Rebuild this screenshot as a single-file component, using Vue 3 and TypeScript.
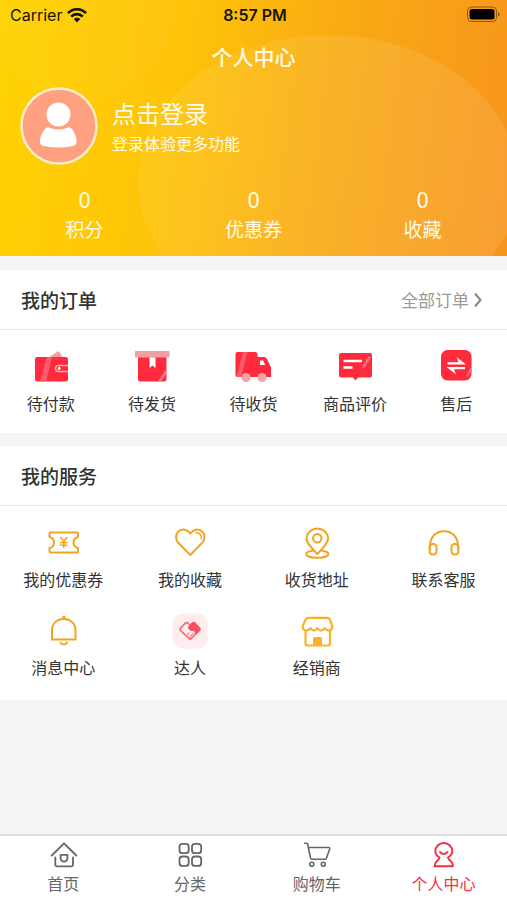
<script setup lang="ts">
interface Entry {
  id: string
  label: string
}

interface Stat {
  value: number
  label: string
}

const stats: Stat[] = [
  { value: 0, label: '积分' },
  { value: 0, label: '优惠券' },
  { value: 0, label: '收藏' },
]

const orders: Entry[] = [
  { id: 'wallet', label: '待付款' },
  { id: 'box', label: '待发货' },
  { id: 'truck', label: '待收货' },
  { id: 'review', label: '商品评价' },
  { id: 'refund', label: '售后' },
]

const services: Entry[] = [
  { id: 'coupon', label: '我的优惠券' },
  { id: 'heart', label: '我的收藏' },
  { id: 'pin', label: '收货地址' },
  { id: 'headset', label: '联系客服' },
  { id: 'bell', label: '消息中心' },
  { id: 'talent', label: '达人' },
  { id: 'shop', label: '经销商' },
]

const tabs: Entry[] = [
  { id: 'home', label: '首页' },
  { id: 'category', label: '分类' },
  { id: 'cart', label: '购物车' },
  { id: 'me', label: '个人中心' },
]

const activeTab = 'me'
</script>

<template>
  <div class="page">
    <header class="hero">
      <svg class="hero-art" viewBox="0 0 507 256" preserveAspectRatio="none" aria-hidden="true">
        <defs>
          <linearGradient id="glow" x1="0" y1="0" x2="1" y2="0">
            <stop offset="0" stop-color="#fff" stop-opacity="0.07" />
            <stop offset="1" stop-color="#fff" stop-opacity="0.1" />
          </linearGradient>
        </defs>
        <circle cx="82" cy="8" r="92" fill="#fff" fill-opacity="0.03" />
        <ellipse cx="328" cy="182" rx="190" ry="147" fill="url(#glow)" />
      </svg>

      <div class="status">
        <div class="carrier">
          <span>Carrier</span>
          <svg width="20" height="16" viewBox="0 0 20 16" aria-hidden="true">
            <g fill="none" stroke="#111" stroke-width="2.6">
              <path d="M1 6.2C6 1 14 1 19 6.2" />
              <path d="M4.2 9.6C7.5 6.300 12.500 6.300 15.800 9.600" />
            </g>
            <path d="M6.800 12Q10 9.300 13.200 12L10 15.400Z" fill="#111" />
          </svg>
        </div>
        <span class="clock">8:57 PM</span>
        <svg class="battery" width="34" height="18" viewBox="0 0 34 18" aria-hidden="true">
          <rect x="1.500" y="1" width="29" height="14.500" rx="4" fill="none" stroke="#8a5a10" stroke-width="1" />
          <rect x="3.500" y="3" width="25" height="10.500" rx="2.500" fill="#000" />
          <path d="M32 6v4.500Q33.500 10 33.500 8.200T32 6" fill="#8a5a10" />
        </svg>
      </div>

      <h1 class="title">个人中心</h1>

      <a class="user" href="#login">
        <svg class="avatar" width="78" height="78" viewBox="0 0 78 78" aria-hidden="true">
          <circle cx="39" cy="39" r="37.500" fill="#ffa180" stroke="#ffeccb" stroke-width="2.500" />
          <circle cx="38.500" cy="27.500" r="12" fill="#fff" />
          <path d="M28 40Q38.500 45 49 40C54 42.500 56.500 49 56.500 55Q56.500 58 53 59Q38 62 24 59Q20 58 20 55C20 49 23 42.500 28 40Z" fill="#fff" />
        </svg>
        <span class="user-text">
          <span class="user-name">点击登录</span>
          <span class="user-hint">登录体验更多功能</span>
        </span>
      </a>

      <ul class="stats">
        <li v-for="stat in stats" :key="stat.label">
          <span class="stat-value">{{ stat.value }}</span>
          <span class="stat-label">{{ stat.label }}</span>
        </li>
      </ul>
    </header>

    <main class="content">
      <section class="card">
        <div class="card-head">
          <h2>我的订单</h2>
          <a class="more" href="#orders">
            全部订单
            <svg width="10" height="16" viewBox="0 0 10 16" aria-hidden="true">
              <path d="M2 1.500L7.500 8L2 14.500" fill="none" stroke="#8c8c8c" stroke-width="2.200" />
            </svg>
          </a>
        </div>
        <nav class="orders">
          <a v-for="item in orders" :key="item.id" class="entry" :href="'#' + item.id">
            <svg width="36" height="36" viewBox="0 0 36 36" aria-hidden="true">
              <g v-if="item.id === 'wallet'">
                <path d="M15 9L24.500 2.500Q26 2 27 3.500L30 9Z" fill="#f0a0a5" />
                <rect x="2" y="8" width="33" height="24.500" rx="2.500" fill="#ff2a3c" />
                <path d="M14 8h5l-6 24.500H7Z" fill="#ff5b69" />
                <path d="M35 16.500H25.500a3 3 0 0 0 0 6H35" fill="#ff2a3c" stroke="#ffadb3" stroke-width="1.500" />
                <circle cx="26.200" cy="19.500" r="1.400" fill="#fff" />
              </g>
              <g v-else-if="item.id === 'box'">
                <path d="M4 8h28.500v22q0 2.500-2.500 2.500H6.500Q4 32.500 4 30Z" fill="#ff2a3c" />
                <rect x="1" y="2" width="34.500" height="6.500" rx="0.500" fill="#f0a0a5" />
                <path d="M15.500 8.500h6V19l-3-2.500-3 2.500Z" fill="#fff" />
                <path d="M32.500 20v4L27 32.500H23.500Z" fill="#ff7984" />
              </g>
              <g v-else-if="item.id === 'truck'">
                <path d="M2.500 3H20q2.500 0 2.500 2.500V8H29q2 0 3 2l4 8.500V28H2.500Q0.500 28 0.500 26V5Q0.500 3 2.500 3Z" fill="#ff2a3c" />
                <path d="M8 3h4.500L6 28H1.500Z" fill="#ff5b69" />
                <path d="M25 11.500h3.200l2 4.500H25Z" fill="#fff" />
                <circle cx="11" cy="28.500" r="4.500" fill="#f3a3a9" />
                <circle cx="27" cy="28.500" r="4.500" fill="#f3a3a9" />
              </g>
              <g v-else-if="item.id === 'review'">
                <path d="M4 4H33q2 0 2 2V26.500q0 2-2 2H21l-2.500 3-2.500-3H4q-2 0-2-2V6q0-2 2-2Z" fill="#ff2a3c" />
                <path d="M31.500 7.500h3L28 18.500H24.500Z" fill="#ff6f7b" />
                <path d="M6.500 12H25M6.500 18.500H15.500" stroke="#fff" stroke-width="2.500" />
              </g>
              <g v-else>
                <rect x="3" y="1" width="30.500" height="30.500" rx="6.500" fill="#ff2a3c" />
                <path d="M33.500 17.500v5L30 27.500h-2.500Z" fill="#ff6f7b" />
                <path d="M18.500 8L28 15.600H9.500V13.300H20.500ZM18 25.500L8.500 17.900H27V20.200H16Z" fill="#fff" />
              </g>
            </svg>
            <span>{{ item.label }}</span>
          </a>
        </nav>
      </section>

      <section class="card">
        <div class="card-head">
          <h2>我的服务</h2>
        </div>
        <nav class="services">
          <a v-for="item in services" :key="item.id" class="entry" :href="'#' + item.id">
            <svg width="36" height="36" viewBox="0 0 36 36" fill="none" stroke="#f3a324" stroke-width="2" stroke-linejoin="round" stroke-linecap="round" aria-hidden="true">
              <g v-if="item.id === 'coupon'">
                <path d="M5.500 7.500H32Q33 7.500 33 8.500V12C27 13.500 27 21.500 33 23V26.500Q33 27.500 32 27.500H5.500Q4.500 27.500 4.500 26.500V23C10.500 21.500 10.500 13.500 4.500 12V8.500Q4.500 7.500 5.500 7.500Z" />
                <path d="M15.500 12.500l3.300 4 3.300-4M18.800 16.500v6M15.500 17.500h6.600M15.500 20.200h6.600" stroke-width="1.600" />
              </g>
              <g v-else-if="item.id === 'heart'">
                <path d="M18.300 30L6.500 18C3 14.500 3.500 8.500 7 6S15.500 4.500 18.300 8.500C21 4.500 26 3.500 29.500 6S33.500 14.500 30 18Z" />
                <path d="M24 7.500C27.500 7.500 30 10.500 29.300 14" stroke-width="1.500" />
              </g>
              <g v-else-if="item.id === 'pin'">
                <path d="M18.300 29C13 23.500 7.500 18.500 7.500 13a10.900 10.600 0 0 1 21.700 0C29.200 18.500 23.500 23.500 18.300 29Z" />
                <circle cx="18.300" cy="13.200" r="4.200" />
                <path d="M13.500 25.700C9.500 26.300 7.200 27.500 7.200 29c0 2.200 5 3.700 11.100 3.700s11.100-1.500 11.100-3.700c0-1.500-2.300-2.700-6.300-3.300" />
              </g>
              <g v-else-if="item.id === 'headset'">
                <path d="M4 24V21.500C4 12 10 6.200 18 6.200S32 12 32 21.500V24" />
                <rect x="3.500" y="19" width="7" height="10.500" rx="3.200" />
                <rect x="25.500" y="19" width="7" height="10.500" rx="3.200" />
              </g>
              <g v-else-if="item.id === 'bell'" stroke-linejoin="miter">
                <path d="M7 26.500V17.500C7 10.500 12 6 18.800 6S30.500 10.500 30.500 17.500V26.500Z" />
                <circle cx="18.800" cy="4.500" r="0.800" />
                <path d="M15.500 29.500C16.500 32 21 32 22 29.500" />
              </g>
              <g v-else-if="item.id === 'talent'" stroke="#f5606c" stroke-width="1.600">
                <rect x="0.500" y="0.500" width="35" height="35" rx="10" fill="#ffecee" stroke="none" />
                <path d="M15.800 10L18.200 12L20.500 10Q21.500 9.300 22.800 10L27.800 15.500Q28.500 16.500 27.500 17.500L18.200 26.500L8.500 17.500Q7.500 16.300 8.500 15.200L13.500 10Q14.700 9.200 15.800 10Z" />
                <path d="M18.200 12L20.500 10H22.800L27.800 15.500L23.500 21Q23 16.500 20 17.500Q16.500 17.500 16.500 14Z" fill="#f5505e" stroke="#f5505e" stroke-width="1" />
                <path d="M15 22L17 20M18 24L21 20.500" stroke="#f88b94" stroke-width="1.300" />
              </g>
              <g v-else stroke="#f9b32b" stroke-width="2.200">
                <path d="M9 4.800H28.500Q29.800 4.800 30.500 6L33 12Q34 15.500 31.500 17Q28 18.500 25.700 15.200Q22 20 18.500 15.200Q15 20 11.500 15.200Q9 18.500 5.500 17Q3 15.500 4 12L7 6Q7.700 4.800 9 4.800Z" />
                <path d="M6.500 18V30.500Q6.500 32.500 8.500 32.500H29Q31 32.500 31 30.500V18" />
                <path d="M14.500 32V25.500Q14.500 24.500 15.500 24.500H21.500Q22.500 24.500 22.500 25.500V32Z" fill="#f9b32b" stroke-width="1" />
              </g>
            </svg>
            <span>{{ item.label }}</span>
          </a>
        </nav>
      </section>
    </main>

    <nav class="tabbar">
      <a v-for="tab in tabs" :key="tab.id" class="tab" :class="{ active: tab.id === activeTab }" :href="'#' + tab.id">
        <svg width="32" height="32" viewBox="0 0 32 32" fill="none" stroke="currentColor" stroke-width="1.800" stroke-linecap="round" stroke-linejoin="round" aria-hidden="true">
          <g v-if="tab.id === 'home'">
            <path d="M4.800 16.500L17 4.300L29.300 16.500" />
            <path d="M8.300 18.500V25.500Q8.300 27.300 10.300 27.300H24Q26 27.300 26 25.500V18.500" />
            <path d="M13.600 15.800H20.400V18.800C20.400 24 13.600 24 13.600 18.800Z" />
          </g>
          <g v-else-if="tab.id === 'category'">
            <rect x="5.500" y="4.800" width="9.200" height="9.400" rx="3" />
            <rect x="18" y="4.800" width="9.200" height="9.400" rx="3" />
            <rect x="5.500" y="17.500" width="9.200" height="9.400" rx="3" />
            <rect x="18" y="17.500" width="9.200" height="9.400" rx="3" />
          </g>
          <g v-else-if="tab.id === 'cart'" stroke-width="1.600">
            <path d="M3.500 4.300H5.500Q6.500 4.300 6.800 5.500L9.500 19Q9.800 20.200 11 20.200H24Q25 20.200 25.400 19.200L28.700 10Q29.200 8.500 27.500 8.500H7.500" />
            <circle cx="10.800" cy="25.300" r="2" />
            <circle cx="22.300" cy="25.300" r="2" />
          </g>
          <g v-else stroke-width="2">
            <path d="M11.500 18.500C9 17 7.300 15 7.300 12.300a8.500 8.300 0 0 1 17 0C24.300 15 22.500 17 20 18.500C20 21 24.800 22.500 24.800 25.500V27.300H6.800V25.500C6.800 22.500 11.500 21 11.500 18.500Z" />
            <path d="M12 13C13.500 15.500 18 15.500 19.500 13" />
          </g>
        </svg>
        <span>{{ tab.label }}</span>
      </a>
    </nav>
  </div>
</template>

<style>
body {
  margin: 0;
  background: #f5f5f5;
}
</style>

<style scoped>
.page {
  display: flex;
  flex-direction: column;
  min-height: 100vh;
  background: #f5f5f5;
  color: #333;
  font-family: "Noto Sans CJK SC", "Noto Sans", sans-serif;
  font-size: 16px;
  line-height: 24px;
}

a {
  color: inherit;
  text-decoration: none;
}

svg {
  display: block;
  flex: none;
}

h1,
h2,
ul {
  margin: 0;
  padding: 0;
  list-style: none;
}

.hero {
  position: relative;
  display: flex;
  flex-direction: column;
  padding-bottom: 13px;
  background: linear-gradient(98deg, #ffd303 0%, #fdc309 35%, #f9aa14 65%, #f7941c 100%);
  color: #fffbe8;
}

.hero-art {
  position: absolute;
  inset: 0;
  width: 100%;
  height: 100%;
}

.hero > :not(.hero-art) {
  position: relative;
}

.status {
  display: grid;
  grid-template-columns: 1fr auto 1fr;
  align-items: center;
  height: 30px;
  padding: 0 7px 0 10px;
  color: #1a1400;
  font-family: Inter, sans-serif;
  font-size: 16px;
}

.carrier {
  display: flex;
  align-items: center;
  gap: 5px;
}

.clock {
  font-weight: 600;
}

.battery {
  justify-self: end;
}

.title {
  margin-top: 11px;
  font-size: 21px;
  font-weight: 500;
  line-height: 30px;
  text-align: center;
}

.user {
  display: flex;
  align-items: center;
  gap: 14px;
  margin: 16px 20px 0;
}

.user-text {
  display: flex;
  flex-direction: column;
  padding-bottom: 2px;
}

.user-name {
  font-size: 24px;
  line-height: 36px;
}

.user-hint {
  font-size: 16px;
  line-height: 24px;
}

.stats {
  display: grid;
  grid-template-columns: repeat(3, 1fr);
  margin-top: 18px;
}

.stats li {
  display: flex;
  flex-direction: column;
  align-items: center;
  gap: 2px;
}

.stat-value {
  font-size: 22px;
  line-height: 30px;
}

.stat-label {
  font-size: 19px;
  line-height: 28px;
}

.content {
  display: flex;
  flex-direction: column;
  flex: 1;
  gap: 13px;
  padding: 14px 0;
}

.card {
  background: #fff;
}

.card-head {
  display: flex;
  align-items: center;
  justify-content: space-between;
  height: 59px;
  padding: 0 24px 0 21px;
  border-bottom: 1px solid #e6e6e6;
}

.card-head h2 {
  font-size: 19px;
  font-weight: 500;
  line-height: 28px;
}

.more {
  display: flex;
  align-items: center;
  gap: 4px;
  color: #999;
  font-size: 17px;
}

.entry {
  display: flex;
  flex-direction: column;
  align-items: center;
  gap: 6px;
}

.orders {
  display: grid;
  grid-template-columns: repeat(5, 1fr);
  padding: 19px 0 18px;
}

.services {
  display: grid;
  grid-template-columns: repeat(4, 1fr);
  row-gap: 22px;
  padding: 19px 0 21px;
}

.tabbar {
  position: sticky;
  bottom: 0;
  display: grid;
  grid-template-columns: repeat(4, 1fr);
  padding: 3px 0 5px;
  border-top: 2px solid #dedede;
  background: #fff;
  color: #666;
}

.tab {
  display: flex;
  flex-direction: column;
  align-items: center;
}

.tab.active {
  color: #f62f43;
}
</style>
